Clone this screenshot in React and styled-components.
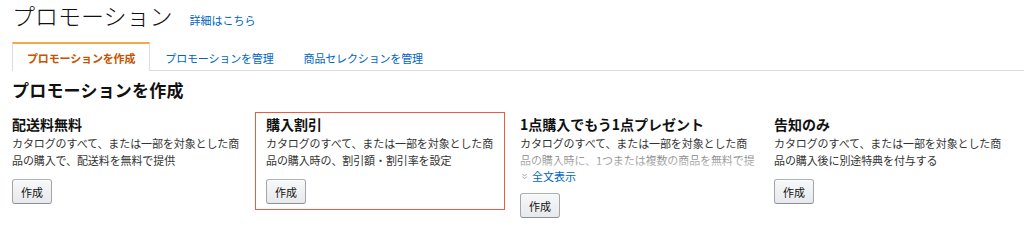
import React from 'react'
import styled, { createGlobalStyle } from 'styled-components'
import { ChevronsDown } from 'lucide-react'

const GlobalStyle = createGlobalStyle`
  body {
    margin: 0;
    background: #fff;
    font-family: "Noto Sans CJK JP", "Noto Sans", "Liberation Sans", sans-serif;
    color: #111;
  }
`;

const Page = styled.div`
  padding: 0 0 0 12px;
  width: 1024px;
  box-sizing: border-box;
  overflow: hidden;
`;

const TitleRow = styled.div`
  display: flex;
  align-items: baseline;
  margin-bottom: 12px;
`;

const Title = styled.h1`
  margin: 0;
  font-size: 23px;
  line-height: 30px;
  font-weight: 300;
  color: #111;
`;

const Link = styled.a`
  color: #0066c0;
  font-size: 11px;
  text-decoration: none;
  margin-left: ${p => p.$gap || 0}px;
  cursor: pointer;
`;

const Tabs = styled.div`
  display: flex;
  height: 28px;
  border-bottom: 1px solid #ddd;
`;

const Tab = styled.div`
  display: flex;
  align-items: center;
  padding: 1px 14px 0;
  font-size: 11px;
  letter-spacing: -0.15px;
  box-sizing: border-box;
  height: ${p => (p.$active ? '29px' : '28px')};
  color: ${p => (p.$active ? '#c45500' : '#0066c0')};
  font-weight: ${p => (p.$active ? 700 : 400)};
  border: 1px solid ${p => (p.$active ? '#ddd' : 'transparent')};
  border-top: 2px solid ${p => (p.$active ? '#f3a847' : 'transparent')};
  border-bottom: none;
  background: #fff;
`;

const Heading = styled.h2`
  margin: 7px 0 10px;
  font-size: 17px;
  line-height: 24px;
  font-weight: 700;
  letter-spacing: 0.2px;
`;

const Cards = styled.div`
  display: grid;
  grid-template-columns: repeat(4, 250px);
  column-gap: 4px;
  margin-left: -11px;
  align-items: start;
`;

const Card = styled.div`
  border: 1px solid ${p => (p.$selected ? '#ee5a42' : 'transparent')};
  padding: 1px 10px 5px;
`;

const CardTitle = styled.h3`
  margin: 0 0 1px;
  font-size: 14px;
  line-height: 20px;
  font-weight: 700;
`;

const Desc = styled.p`
  margin: 0;
  font-size: 11px;
  line-height: 17px;
  letter-spacing: -0.1px;
  color: #333;
  width: 238px;
  position: relative;
  max-height: ${p => (p.$clamped ? '34px' : 'none')};
  overflow: hidden;
  &::after {
    content: '';
    display: ${p => (p.$clamped ? 'block' : 'none')};
    position: absolute;
    left: 0;
    right: 0;
    bottom: 0;
    height: 17px;
    background: linear-gradient(rgba(255, 255, 255, 0.3), rgba(255, 255, 255, 0.75));
  }
`;

const More = styled.div`
  display: flex;
  align-items: center;
  gap: 3px;
  height: 14px;
  font-size: 11px;
  color: #888;
`;

const Button = styled.button`
  display: block;
  margin-top: 10px;
  width: 40px;
  height: 25px;
  padding: 0;
  font-family: inherit;
  font-size: 11px;
  color: #111;
  background: linear-gradient(#f7f8fa, #e7e9ec);
  border: 1px solid #adb1b8;
  border-color: #adb1b8 #a2a6ac #8d9096;
  border-radius: 3px;
  box-shadow: inset 0 1px 0 rgba(255, 255, 255, 0.6);
  cursor: pointer;
`;

const cards = [
  {
    title: '配送料無料',
    desc: 'カタログのすべて、または一部を対象とした商品の購入で、配送料を無料で提供',
  },
  {
    title: '購入割引',
    desc: 'カタログのすべて、または一部を対象とした商品の購入時の、割引額・割引率を設定',
    selected: true,
  },
  {
    title: '1点購入でもう1点プレゼント',
    desc: 'カタログのすべて、または一部を対象とした商品の購入時に、1つまたは複数の商品を無料で提供します。対象の商品を設定してください',
    clamped: true,
  },
  {
    title: '告知のみ',
    desc: 'カタログのすべて、または一部を対象とした商品の購入後に別途特典を付与する',
  },
]

const App = () => {
  return (
    <Page>
      <GlobalStyle />
      <TitleRow>
        <Title>プロモーション</Title>
        <Link $gap={17}>詳細はこちら</Link>
      </TitleRow>
      <Tabs>
        <Tab $active>プロモーションを作成</Tab>
        <Tab>プロモーションを管理</Tab>
        <Tab>商品セレクションを管理</Tab>
      </Tabs>
      <Heading>プロモーションを作成</Heading>
      <Cards>
        {cards.map(c => (
          <Card key={c.title} $selected={c.selected}>
            <CardTitle>{c.title}</CardTitle>
            <Desc $clamped={c.clamped}>{c.desc}</Desc>
            {c.clamped && (
              <More>
                <ChevronsDown size={9} color="#888" strokeWidth={2} />
                <Link>全文表示</Link>
              </More>
            )}
            <Button>作成</Button>
          </Card>
        ))}
      </Cards>
    </Page>
  )
}

export default App
